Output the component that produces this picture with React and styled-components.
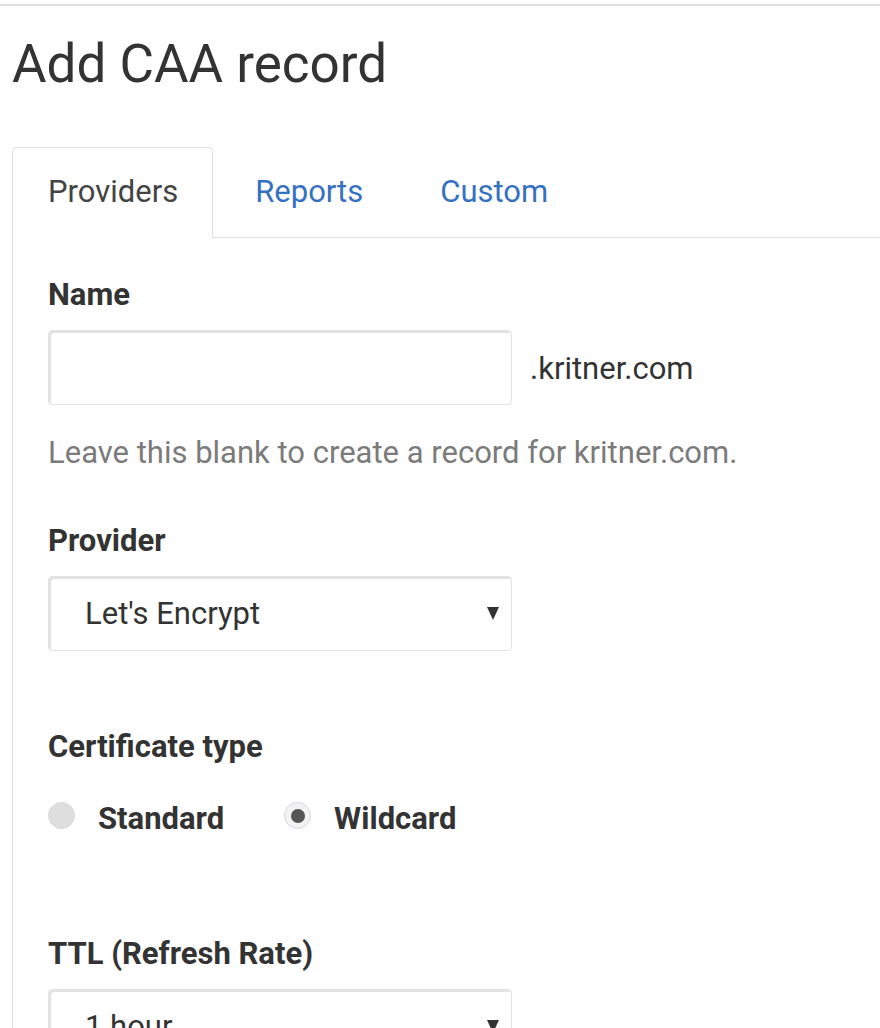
import React from "react";
import styled, { createGlobalStyle } from "styled-components";

const Global = createGlobalStyle`
  html, body { margin: 0; padding: 0; background: #fff; }
  body { font-family: Roboto, "Liberation Sans", Arial, sans-serif; color: #333; overflow: hidden; }
  * { box-sizing: border-box; }
`;

const Page = styled.div`
  padding-top: 4px;
`;

const TopRule = styled.div`
  border-top: 2px solid #e0e0e0;
  padding-left: 12px;
`;

const Title = styled.h1`
  margin: 26px 0 51px;
  font-size: 53px;
  line-height: 64px;
  font-weight: 400;
  color: #333;
`;

const TabNav = styled.ul`
  display: flex;
  list-style: none;
  margin: 0;
  padding: 0;
  border-bottom: 1px solid #ddd;
`;

const Tab = styled.li`
  margin: 0 6px -1px 0;
  padding: 26px 34px 27px 35px;
  font-size: 31px;
  line-height: 36px;
  border: 1px solid ${(p) => (p.$active ? "#ddd" : "transparent")};
  border-bottom-color: ${(p) => (p.$active ? "#fff" : "transparent")};
  border-radius: 5px 5px 0 0;
  background: ${(p) => (p.$active ? "#fff" : "transparent")};
  color: ${(p) => (p.$active ? "#444" : "#3571c2")};
`;

const Panel = styled.div`
  border-left: 1px solid #ddd;
  padding: 39px 0 0 35px;
  min-height: 820px;
`;

const Group = styled.div`
  margin-bottom: ${(p) => p.$mb || 0}px;
`;

const Label = styled.div`
  font-size: 31px;
  line-height: 36px;
  font-weight: 700;
  color: #333;
  margin-bottom: ${(p) => (p.$flush ? 0 : 17)}px;
`;

const InputRow = styled.div`
  display: flex;
  align-items: center;
  gap: 18px;
`;

const TextBox = styled.div`
  width: 464px;
  height: 75px;
  border: 1px solid #e4e4e4;
  border-radius: 4px;
  box-shadow: inset 3px 3px 1px -1px #e2e2e2;
  background: #fff;
`;

const Suffix = styled.span`
  font-size: 31px;
  line-height: 36px;
  color: #333;
  margin-top: 3px;
`;

const Help = styled.div`
  margin-top: 30px;
  font-size: 31px;
  line-height: 36px;
  color: #7b7b7b;
`;

const Select = styled.div`
  width: 464px;
  height: 75px;
  border: 1px solid #e4e4e4;
  border-radius: 4px;
  box-shadow: inset 3px 3px 1px -1px #e2e2e2;
  background: #fff;
  display: flex;
  align-items: center;
  justify-content: space-between;
  padding: 0 12px 0 36px;
`;

const SelectText = styled.span`
  font-size: 31px;
  line-height: 36px;
  color: #333;
`;

const RadioRow = styled.div`
  display: flex;
  align-items: center;
  margin-top: 36px;
`;

const RadioItem = styled.label`
  display: flex;
  align-items: center;
  gap: 23px;
  margin-right: 60px;
  font-size: 31px;
  line-height: 36px;
  font-weight: 700;
  color: #333;
`;

const RadioCircle = styled.span`
  width: 27px;
  height: 27px;
  border-radius: 50%;
  border: 1px solid #d4d8de;
  background: ${(p) => (p.$checked ? "#f2f2f2" : "#dedede")};
  display: flex;
  align-items: center;
  justify-content: center;
  margin-top: -7px;
  &::after {
    content: "";
    display: ${(p) => (p.$checked ? "block" : "none")};
    width: 14px;
    height: 14px;
    border-radius: 50%;
    background: #555;
  }
`;

const Arrow = () => (
  <svg width="12" height="13" viewBox="0 0 12 13">
    <polygon points="0,0 12,0 6,13" fill="#333" />
  </svg>
);

export default function App() {
  return (
    <Page>
      <Global />
      <TopRule>
        <Title>Add CAA record</Title>
        <TabNav>
          <Tab $active>Providers</Tab>
          <Tab>Reports</Tab>
          <Tab>Custom</Tab>
        </TabNav>
        <Panel>
          <Group $mb={52}>
            <Label>Name</Label>
            <InputRow>
              <TextBox />
              <Suffix>.kritner.com</Suffix>
            </InputRow>
            <Help>Leave this blank to create a record for kritner.com.</Help>
          </Group>
          <Group $mb={78}>
            <Label>Provider</Label>
            <Select>
              <SelectText>Let's Encrypt</SelectText>
              <Arrow />
            </Select>
          </Group>
          <Group $mb={99}>
            <Label $flush>Certificate type</Label>
            <RadioRow>
              <RadioItem>
                <RadioCircle />
                Standard
              </RadioItem>
              <RadioItem>
                <RadioCircle $checked />
                Wildcard
              </RadioItem>
            </RadioRow>
          </Group>
          <Group>
            <Label>TTL (Refresh Rate)</Label>
            <Select>
              <SelectText>1 hour</SelectText>
              <Arrow />
            </Select>
          </Group>
        </Panel>
      </TopRule>
    </Page>
  );
}
